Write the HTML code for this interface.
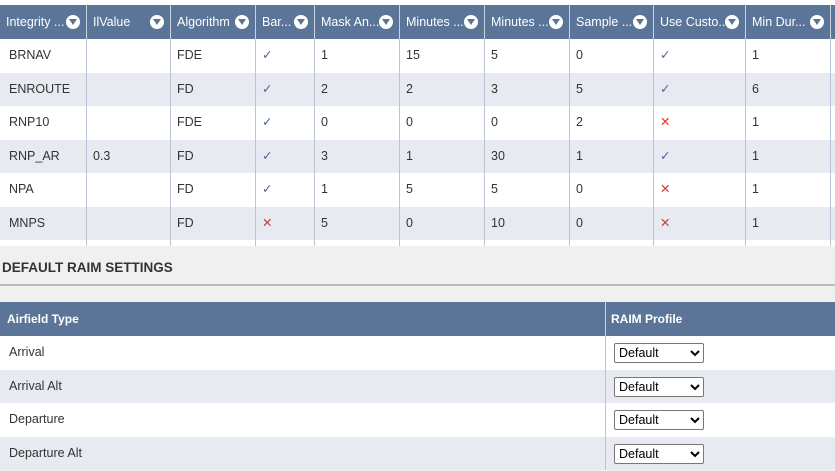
<!DOCTYPE html>
<html><head><style>
body{margin:0;width:835px;height:471px;overflow:hidden;background:#f0f0f0;font-family:"Liberation Sans",sans-serif;font-size:12.5px;color:#333;position:relative}
.a{position:absolute}
.h{background:#5a7598;color:#fff;height:34px;line-height:34px}
.cell{position:absolute;top:0;height:100%;padding-left:6px;box-sizing:border-box;border-left:1px solid #b9c5d6;white-space:nowrap}
.h .cell{border-left:1px solid #c9d3e0}
.ic{position:absolute;right:6px;top:10px;width:14px;height:14px;border-radius:50%;background:#fff}
.ic:after{content:"";position:absolute;left:3px;top:4px;border-left:4px solid transparent;border-right:4px solid transparent;border-top:6px solid #5a7598}
.r{height:33.5px;line-height:33.5px;background:#fff}
.r.g{background:#e7eaf0}
.ck{color:#4a6a9a}.x{color:#d33}
select{font-family:"Liberation Sans",sans-serif;font-size:12.5px;width:90px;height:20px;border:1px solid #777;border-radius:2px;background:#fff;position:absolute;left:8px;top:7px}
</style></head><body>
<div class="a" style="left:0;top:0;width:835px;height:246px;background:#fff"></div>
<div id="t"></div>
<script>
var xs=[0,86,170,255,314,399,484,569,653,745,830,900];
var hd=["Integrity ...","IlValue","Algorithm","Bar...","Mask An...","Minutes ...","Minutes ...","Sample ...","Use Custo...","Min Dur...",""];
var rows=[["BRNAV","","FDE","v","1","15","5","0","v","1",""],["ENROUTE","","FD","v","2","2","3","5","v","6",""],["RNP10","","FDE","v","0","0","0","2","x","1",""],["RNP_AR","0.3","FD","v","3","1","30","1","v","1",""],["NPA","","FD","v","1","5","5","0","x","1",""],["MNPS","","FD","x","5","0","10","0","x","1",""]];
var h='<div class="a h" style="left:0;top:5px;width:835px">';
for(var i=0;i<11;i++){h+='<div class="cell" style="left:'+xs[i]+'px;width:'+(xs[i+1]-xs[i])+'px;'+(i==0?'border-left:none':'')+'">'+hd[i]+(i<10?'<span class="ic"></span>':'')+'</div>';}
h+='</div>';
for(var r=0;r<7;r++){var y=39+r*33.5;var ht=r==6?6:33.5;
h+='<div class="a r'+(r%2?' g':'')+'" style="left:0;top:'+y+'px;width:835px;height:'+ht+'px">';
for(var i=0;i<11;i++){var v=r<6?rows[r][i]:'';if(v=='v')v='<span class="ck">&#10003;</span>';else if(v=='x')v='<span class="x">&#10005;</span>';
h+='<div class="cell" style="left:'+xs[i]+'px;width:'+(xs[i+1]-xs[i])+'px;'+(i==0?'border-left:none;padding-left:9px':'')+'">'+v+'</div>';}
h+='</div>';}
document.getElementById('t').innerHTML=h;
</script>
<div class="a" style="left:2px;top:260px;font-size:13.5px;font-weight:bold;color:#333">DEFAULT RAIM SETTINGS</div>
<div class="a" style="left:0;top:284px;width:835px;height:2px;background:#bbb"></div>
<div class="a h" style="left:0;top:302px;width:835px;font-weight:bold;font-size:12px">
<div class="cell" style="left:0;width:605px;border-left:none;padding-left:7px">Airfield Type</div>
<div class="cell" style="left:605px;width:230px;padding-left:5px">RAIM Profile</div></div>
<div class="a r" style="left:0;top:336px;width:835px"><div class="cell" style="left:0;border:none;padding-left:9px">Arrival</div><div class="cell" style="left:605px;width:230px"><select><option>Default</option></select></div></div>
<div class="a r g" style="left:0;top:369.5px;width:835px"><div class="cell" style="left:0;border:none;padding-left:9px">Arrival Alt</div><div class="cell" style="left:605px;width:230px"><select><option>Default</option></select></div></div>
<div class="a r" style="left:0;top:403px;width:835px"><div class="cell" style="left:0;border:none;padding-left:9px">Departure</div><div class="cell" style="left:605px;width:230px"><select><option>Default</option></select></div></div>
<div class="a r g" style="left:0;top:436.5px;width:835px"><div class="cell" style="left:0;border:none;padding-left:9px">Departure Alt</div><div class="cell" style="left:605px;width:230px"><select><option>Default</option></select></div></div>
</body></html>
